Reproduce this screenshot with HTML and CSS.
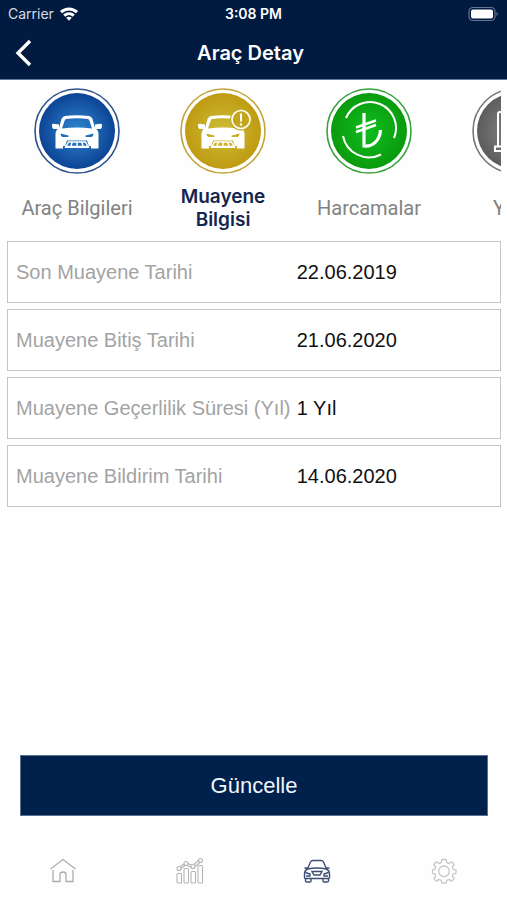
FILE: index.html
```html
<!DOCTYPE html>
<html lang="tr">
<head>
<meta charset="utf-8">
<meta name="viewport" content="width=device-width, initial-scale=1">
<title>Araç Detay</title>
<link rel="stylesheet" href="styles.css">
</head>
<body>
<div class="app">
  <header class="header">
    <div class="status">
      <div class="carrier">
        <span>Carrier</span>
        <svg width="20" height="16" viewBox="0 0 20 16" fill="none" stroke="#fff" stroke-width="3" aria-hidden="true">
          <path d="M2 6.2C6.6 1.8 13.4 1.8 18 6.2"/>
          <path d="M5.2 9.6C8 7 12 7 14.8 9.6"/>
          <path d="M7.2 11.8Q10 9.6 12.8 11.8L10 14.8z" fill="#fff" stroke="none"/>
        </svg>
      </div>
      <span class="clock">3:08 PM</span>
      <svg class="battery" width="31" height="16" viewBox="0 0 31 16" aria-hidden="true">
        <rect x="1" y="1.5" width="26" height="13" rx="4" fill="none" stroke="#66768f" stroke-width="1.2"/>
        <rect x="3" y="3.5" width="22" height="9" rx="2" fill="#fff"/>
        <path d="M28.5 5.8Q31 8 28.5 10.2z" fill="#66768f"/>
      </svg>
    </div>
    <div class="titlebar">
      <button class="back" type="button" aria-label="Geri">
        <svg width="18" height="28" viewBox="0 0 18 28" fill="none" stroke="#fff" stroke-width="3.4"><path d="M15 2L3 14L15 26"/></svg>
      </button>
      <h1>Araç Detay</h1>
    </div>
  </header>

  <nav class="tabs" aria-label="Araç bölümleri">
    <button class="tab" type="button">
      <svg width="88" height="88" viewBox="0 0 88 88" aria-hidden="true">
        <defs>
          <radialGradient id="blue"><stop offset="0" stop-color="#2f86cf"/><stop offset="1" stop-color="#0c4495"/></radialGradient>
          <g id="car-body">
            <path fill="#fff" fill-rule="evenodd" d="M32 29Q44 27.500 56 29Q58.500 29.500 59.500 32L62 41Q65.500 43 65.500 47V61.500H58V59H30V61.500H22.500V47Q22.500 43 26 41L28.500 32Q29.500 29.500 32 29zM33 32Q44 30.500 55 32Q56 32.300 56.500 34L59 41.500Q44 39.500 29 41.500L31.500 34Q32 32.300 33 32zM27.500 46.500L35.500 48.500V50H29.500Q27.500 49 27.500 46.500zM60.500 46.500L52.500 48.500V50H58.500Q60.500 49 60.500 46.500zM34 53.500H54L56.500 61H31.500z"/>
            <path fill="#fff" d="M19 38Q19 36.500 21 36.700L26 37.500V42H20.500Q19 41.500 19 38z"/>
            <path d="M33 59.500L35.500 55H52.500L55 59.500M39 55.500L38 59M44 55.500V59M49 55.500L50 59" stroke="#fff" stroke-width="1.500" fill="none"/>
            <path d="M32 59.500H56" stroke="#fff" stroke-width="1.500"/>
          </g>
          <path id="mirror" fill="#fff" d="M69 38Q69 36.500 67 36.700L62 37.500V42H67.500Q69 41.500 69 38z"/>
        </defs>
        <circle cx="44" cy="44" r="42" fill="#fff" stroke="#31528b" stroke-width="1.600"/>
        <circle cx="44" cy="44" r="38" fill="url(#blue)"/>
        <use href="#car-body"/><use href="#mirror"/>
      </svg>
      <span class="tab-label">Araç Bilgileri</span>
    </button>
    <button class="tab active" type="button" aria-current="page">
      <svg width="88" height="88" viewBox="0 0 88 88" aria-hidden="true">
        <defs><radialGradient id="gold"><stop offset="0" stop-color="#cdbd38"/><stop offset="1" stop-color="#bf9b12"/></radialGradient></defs>
        <circle cx="44" cy="44" r="42" fill="#fff" stroke="#c2a434" stroke-width="1.600"/>
        <circle cx="44" cy="44" r="38" fill="url(#gold)"/>
        <use href="#car-body"/>
        <circle cx="62" cy="32.500" r="11" fill="#c4aa22"/>
        <circle cx="62" cy="32.500" r="9" fill="#c4a61e" stroke="#fff" stroke-width="1.600"/>
        <path d="M62 26.500V34.500" stroke="#fff" stroke-width="2"/><circle cx="62" cy="37.500" r="1.200" fill="#fff"/>
      </svg>
      <span class="tab-label">Muayene Bilgisi</span>
    </button>
    <button class="tab" type="button">
      <svg width="88" height="88" viewBox="0 0 88 88" aria-hidden="true">
        <defs><radialGradient id="green"><stop offset="0" stop-color="#10bc20"/><stop offset="1" stop-color="#0a9b0c"/></radialGradient></defs>
        <circle cx="44" cy="44" r="42" fill="#fff" stroke="#35a23c" stroke-width="1.600"/>
        <circle cx="44" cy="44" r="38" fill="url(#green)"/>
        <g fill="none" stroke="#fff" stroke-width="2">
          <path d="M21 31A26 26 0 0 1 69 51"/>
          <path d="M18 49A26.500 26.500 0 0 0 56 67.500"/>
        </g>
        <g fill="none" stroke="#fff" stroke-width="3.200">
          <path d="M39 26V59C48 60 55 53 55.500 43"/>
          <path d="M31 40.500L51 33.500M31 45L51 38" stroke-width="2.400"/>
        </g>
      </svg>
      <span class="tab-label">Harcamalar</span>
    </button>
    <button class="tab" type="button">
      <svg width="88" height="88" viewBox="0 0 88 88" aria-hidden="true">
        <defs><radialGradient id="gray"><stop offset="0" stop-color="#8a8a8a"/><stop offset="1" stop-color="#5c5c5c"/></radialGradient></defs>
        <circle cx="44" cy="44" r="42" fill="#fff" stroke="#777" stroke-width="1.600"/>
        <circle cx="44" cy="44" r="38" fill="url(#gray)"/>
        <path d="M27 59V27Q27 25 29 25H48V59M24 59.500H51V64H24z" fill="none" stroke="#fff" stroke-width="2"/>
      </svg>
      <span class="tab-label">Yakıt</span>
    </button>
  </nav>

  <main class="content">
    <dl class="details">
      <div class="row"><dt>Son Muayene Tarihi</dt><dd>22.06.2019</dd></div>
      <div class="row"><dt>Muayene Bitiş Tarihi</dt><dd>21.06.2020</dd></div>
      <div class="row"><dt>Muayene Geçerlilik Süresi (Yıl)</dt><dd>1 Yıl</dd></div>
      <div class="row"><dt>Muayene Bildirim Tarihi</dt><dd>14.06.2020</dd></div>
    </dl>
    <button class="update" type="button">Güncelle</button>
  </main>

  <nav class="bottom" aria-label="Ana menü">
    <a href="#home" aria-label="Ana sayfa">
      <svg width="28" height="28" viewBox="0 0 28 28" fill="none" stroke="#adadad" stroke-width="1.300">
        <path d="M1.500 12L14 2.500L26.500 12"/>
        <path d="M4 13V24.500H11V17.500Q11 15 14 15T17 17.500V24.500H24V13"/>
      </svg>
    </a>
    <a href="#stats" aria-label="İstatistik">
      <svg width="28" height="28" viewBox="0 0 28 28" fill="none" stroke="#b5b5b5" stroke-width="1.100">
        <rect x="1" y="16.500" width="4.500" height="9.500" rx="1"/><rect x="8" y="11.500" width="4.500" height="14.500" rx="1"/><rect x="15" y="14.500" width="4.500" height="11.500" rx="1"/><rect x="22" y="8.500" width="4.500" height="17.500" rx="1"/>
        <circle cx="3" cy="11.500" r="2"/><circle cx="10" cy="6.500" r="2"/><circle cx="17" cy="9.500" r="2"/><circle cx="24.500" cy="3.500" r="2"/>
        <path d="M4.500 9.500L8 7M4.800 11.500L9 8.500M12 6.500L15.500 8M11.500 8.500L15 10.500M18 7.500L23 3M19 9.500L24 5.500"/>
      </svg>
    </a>
    <a href="#car" aria-label="Araç" aria-current="page">
      <svg width="28" height="28" viewBox="0 0 28 28" fill="none" stroke="#3d4e76" stroke-width="1.400">
        <path d="M4.500 12L7.500 5Q8.200 3.500 10 3.500H18Q19.800 3.500 20.500 5L23.500 12"/>
        <path d="M4.500 12Q14 10 23.500 12Q26.500 13.500 26.500 17V20.500Q26.500 21.500 25 21.500H3Q1.500 21.500 1.500 20.500V17Q1.500 13.500 4.500 12zM1.500 11H5M23 11H26.500"/>
        <path d="M2.500 21V24Q2.500 25 4 25H7Q8 25 8 24V21.500M20 21.500V24Q20 25 21 25H24Q25.500 25 25.500 24V21M9 14.500H19L17 18H11zM2.500 15.500L7 17V19H3M25.500 15.500L21 17V19H25"/>
      </svg>
    </a>
    <a href="#settings" aria-label="Ayarlar">
      <svg width="28" height="28" viewBox="0 0 28 28" fill="none" stroke="#c8c8c8" stroke-width="1.300" stroke-linejoin="round">
        <path d="M11.800 2.500H16.200L16.800 5.700L19 6.600L21.700 4.800L24.200 7.500L22.300 10L23.200 12.300L26 12.700V16.300L23.200 16.800L22.300 19L24.200 21.600L21.600 24.200L19 22.400L16.800 23.300L16.200 26H11.800L11.200 23.300L9 22.400L6.400 24.200L3.800 21.600L5.700 19L4.800 16.800L2.500 16.300V12.700L4.800 12.300L5.700 10L3.800 7.500L6.400 4.800L9 6.600L11.200 5.700z"/>
        <circle cx="14" cy="14.300" r="5.300"/>
      </svg>
    </a>
  </nav>
</div>
</body>
</html>
```
FILE: styles.css
```css
* { box-sizing: border-box; }

body {
  margin: 0;
  background: #fefefe;
  font-family: "Liberation Sans", Arial, sans-serif;
  color: #111;
}

button {
  padding: 0;
  border: 0;
  background: none;
  font: inherit;
  color: inherit;
}

.app {
  display: flex;
  flex-direction: column;
  min-height: 100vh;
}

.header {
  background: #001b3f;
  border-bottom: 1px solid #62779a;
  color: #fff;
  font-family: Inter, sans-serif;
}

.status {
  display: grid;
  grid-template-columns: 1fr auto 1fr;
  align-items: center;
  height: 27px;
  padding: 0 8px;
  font-size: 14px;
}

.carrier {
  display: flex;
  align-items: center;
  gap: 5px;
  color: #d5dbe5;
}

.clock { font-weight: 600; }
.battery { justify-self: end; }

.titlebar {
  display: grid;
  grid-template-columns: 48px 1fr 54px;
  align-items: center;
  height: 52px;
}

.back { display: flex; padding-left: 15px; }

h1 {
  margin: 0;
  text-align: center;
  font-size: 20px;
  font-weight: 600;
}

.tabs {
  display: flex;
  margin: 0 6px 0 4px;
  overflow: hidden;
}

.tab {
  flex: 0 0 146px;
  display: flex;
  flex-direction: column;
  align-items: center;
  padding-top: 7px;
}

.tab-label {
  display: flex;
  align-items: center;
  height: 66px;
  max-width: 120px;
  font-family: Roboto, sans-serif;
  font-size: 20px;
  line-height: 23px;
  color: #828282;
}

.active .tab-label {
  font-family: Inter, sans-serif;
  font-size: 19px;
  font-weight: 600;
  color: #14264f;
}

.content {
  flex: 1;
  display: flex;
  flex-direction: column;
  justify-content: space-between;
}

.details {
  display: flex;
  flex-direction: column;
  gap: 6px;
  margin: 0 6px 0 7px;
}

.row {
  display: grid;
  grid-template-columns: 58% 1fr;
  align-items: center;
  height: 62px;
  padding-left: 8px;
  border: 1px solid #c4c4c4;
  background: #fff;
  font-size: 20px;
}

dt { color: #a3a3a3; white-space: nowrap; }
dd { margin: 0; }

.update {
  height: 61px;
  margin: 0 19px 0 20px;
  border: 1px solid #5b7090;
  background: #00214b;
  color: #eef5fb;
  font-size: 22px;
}

.bottom {
  display: grid;
  grid-template-columns: repeat(4, 1fr);
  justify-items: center;
  padding: 41px 0 15px;
}

.bottom a { display: flex; }
```
